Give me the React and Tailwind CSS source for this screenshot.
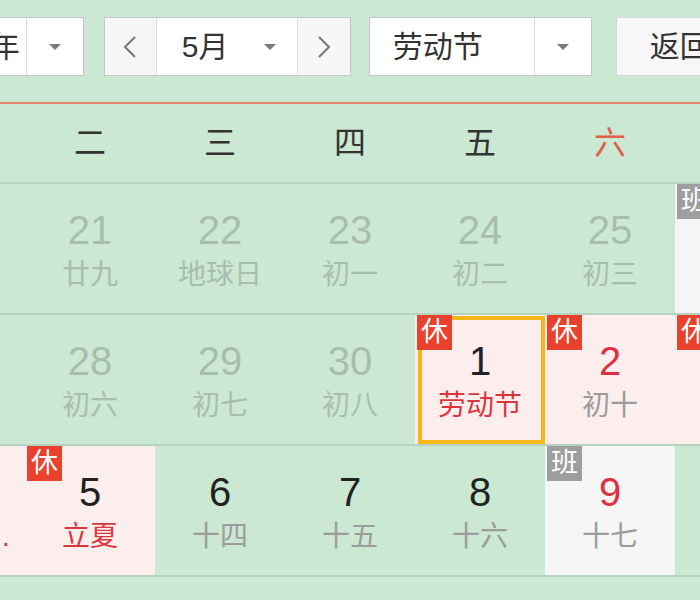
import React from 'react';

const FONT = { fontFamily: '"Liberation Sans", Arial, "Noto Sans CJK SC", sans-serif' };

// 一 .. 日, columns 130px wide, the first starts off-screen
const weeks = ['一', '二', '三', '四', '五', '六', '日'];

const rows = [
  [
    { d: 20, l: '廿八', other: true },
    { d: 21, l: '廿九', other: true },
    { d: 22, l: '地球日', other: true },
    { d: 23, l: '初一', other: true },
    { d: 24, l: '初二', other: true },
    { d: 25, l: '初三', other: true },
    { d: 26, l: '初四', other: true, tag: 'ban' },
  ],
  [
    { d: 27, l: '初五', other: true },
    { d: 28, l: '初六', other: true },
    { d: 29, l: '初七', other: true },
    { d: 30, l: '初八', other: true },
    { d: 1, l: '劳动节', tag: 'rest', festival: true, selected: true },
    { d: 2, l: '初十', tag: 'rest', weekend: true },
    { d: 3, l: '十一', tag: 'rest', weekend: true },
  ],
  [
    { d: 4, l: '五四青年节', festival: true, pink: true },
    { d: 5, l: '立夏', tag: 'rest', festival: true },
    { d: 6, l: '十四' },
    { d: 7, l: '十五' },
    { d: 8, l: '十六' },
    { d: 9, l: '十七', tag: 'ban', weekend: true },
    { d: 10, l: '十八', weekend: true },
  ],
];

function Caret() {
  return (
    <svg width="14" height="8" viewBox="0 0 14 8">
      <path d="M1 1h12L7 7z" fill="#7a7a7a" />
    </svg>
  );
}

function Chevron({ dir }) {
  return (
    <svg width="14" height="22" viewBox="0 0 14 22">
      <path d={dir === 'left' ? 'M12 1L2 11l10 10' : 'M2 1l10 10L2 21'} fill="none" stroke="#777" strokeWidth="2" />
    </svg>
  );
}

function Cell({ c }) {
  let bg = '';
  if (c.tag === 'rest' || c.pink) bg = 'bg-[#fdeeee]';
  if (c.tag === 'ban') bg = 'bg-[#f5f5f5]';

  let numColor = 'text-[#222]';
  if (c.weekend) numColor = 'text-[#e0303f]';
  if (c.other) numColor = 'text-[#a9bdaf]';

  let lunarColor = 'text-[#9c9c9c]';
  if (c.festival) lunarColor = 'text-[#d9363e]';
  if (c.other) lunarColor = 'text-[#a9bdaf]';

  return (
    <div className={`relative h-[129px] ${bg} flex flex-col items-center`}>
      {c.selected && <div className="absolute top-[1px] bottom-0 left-[3px] right-0 border-4 border-[#f6b617]" />}
      {c.tag && (
        <div
          className={`absolute top-0 left-[2px] z-10 w-[35px] h-[35px] flex items-center justify-center text-white text-[27px] leading-none ${
            c.tag === 'rest' ? 'bg-[#e8412c]' : 'bg-[#9e9e9e]'
          }`}
        >
          {c.tag === 'rest' ? '休' : '班'}
        </div>
      )}
      <div className={`pt-[24px] text-[40px] leading-[44px] ${numColor}`}>{c.d}</div>
      <div className={`mt-[7px] w-full px-[4px] text-center text-[28px] leading-[32px] truncate ${lunarColor}`}>{c.l}</div>
    </div>
  );
}

export default function App() {
  return (
    <div className="w-[700px] h-[600px] overflow-hidden bg-[#cbe8d3] text-[#333]" style={FONT}>
      {/* toolbar */}
      <div className="flex items-start pt-[17px] ml-[-88px] h-[102px] text-[30px] whitespace-nowrap">
        <div className="flex h-[59px] bg-white border border-[#c6c6c6]">
          <div className="flex items-center pl-[10px] pr-[6px] border-r border-[#ddd]">2015年</div>
          <div className="w-[56px] flex items-center justify-center">
            <Caret />
          </div>
        </div>

        <div className="ml-[20px] flex h-[59px] bg-white border border-[#c6c6c6]">
          <div className="w-[52px] flex items-center justify-center bg-[#f6f6f6] border-r border-[#ddd]">
            <Chevron dir="left" />
          </div>
          <div className="w-[141px] flex items-center pl-[25px] pr-[20px] justify-between border-r border-[#ddd]">
            <span>5月</span>
            <Caret />
          </div>
          <div className="w-[52px] flex items-center justify-center bg-[#f6f6f6]">
            <Chevron dir="right" />
          </div>
        </div>

        <div className="ml-[18px] flex h-[59px] bg-white border border-[#c6c6c6]">
          <div className="w-[165px] flex items-center pl-[23px] border-r border-[#ddd]">劳动节</div>
          <div className="w-[56px] flex items-center justify-center">
            <Caret />
          </div>
        </div>

        <div className="ml-[24px] h-[59px] flex items-center pl-[33px] pr-[20px] bg-[#f7f7f7] border border-[#d6d6d6]">
          返回今天
        </div>
      </div>

      <div className="h-[2px] bg-[#df866d]" />

      {/* week header + days */}
      <div className="ml-[-105px] grid grid-cols-[repeat(7,130px)]">
        {weeks.map((w, i) => (
          <div
            key={w}
            className={`h-[78px] flex items-center justify-center text-[32px] ${i >= 5 ? 'text-[#e0604a]' : 'text-[#333]'}`}
          >
            {w}
          </div>
        ))}
      </div>

      {rows.map((r, ri) => (
        <div key={ri} className="ml-[-105px] border-t-2 border-[#b7d2bf] grid grid-cols-[repeat(7,130px)]">
          {r.map((c, ci) => (
            <Cell key={ci} c={c} />
          ))}
        </div>
      ))}
      <div className="border-t-2 border-[#b7d2bf]" />
    </div>
  );
}
